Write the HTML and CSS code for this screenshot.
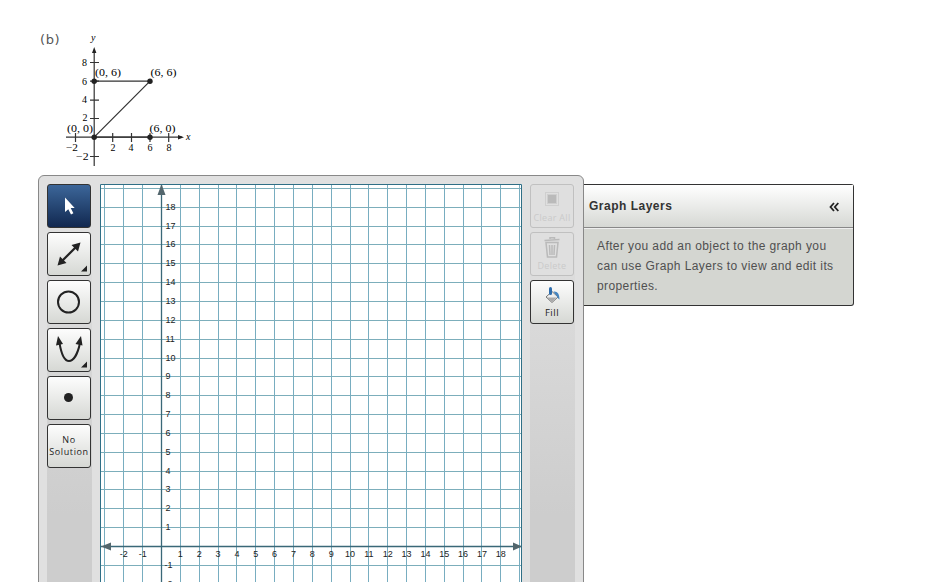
FILE: index.html
```html
<!DOCTYPE html>
<html>
<head>
    <meta charset="UTF-8">
    <title>Graphing Tool</title>
    <link rel="stylesheet" href="styles.css">
</head>
<body>
    <div class="question">
        <span class="part-label">(b)</span>
        <svg class="figure" width="150" height="150" viewBox="60 25 150 150">
            <g class="figure-lines">
                <path d="M94.2 50V166M66 137.2H182M75.5 133v9M112.7 133v9M131.5 133v9M150 133v9M168.7 133v9M90 62.5h9M90 81.2h9M90 100.2h9M90 118.5h9M90 156.5h9"/>
                <path d="M94.2 81.2H150L94.2 137.2H150"/>
            </g>
            <g class="figure-dots">
                <path d="M94.2 47l-2.2 6h4.4zM184 137.2l-6-2.2v4.4z"/>
                <circle cx="94.2" cy="81.2" r="2.7"/>
                <circle cx="150" cy="81.2" r="2.7"/>
                <circle cx="94.2" cy="137.2" r="2.7"/>
                <circle cx="150" cy="137.2" r="2.7"/>
            </g>
            <g class="figure-text">
                <text x="91" y="41" class="italic">y</text>
                <text x="186" y="140" class="italic">x</text>
                <text x="82" y="66">8</text>
                <text x="82" y="85">6</text>
                <text x="82" y="103">4</text>
                <text x="82.5" y="121">2</text>
                <text x="76" y="160" textLength="12.5" lengthAdjust="spacingAndGlyphs">−2</text>
                <text x="66" y="151" textLength="12" lengthAdjust="spacingAndGlyphs">−2</text>
                <text x="110.5" y="151">2</text>
                <text x="128.5" y="151">4</text>
                <text x="147.5" y="151">6</text>
                <text x="166.5" y="151">8</text>
            </g>
            <g class="figure-points">
                <text x="95" y="76" textLength="26" lengthAdjust="spacingAndGlyphs">(0, 6)</text>
                <text x="150.5" y="76" textLength="26" lengthAdjust="spacingAndGlyphs">(6, 6)</text>
                <text x="67" y="132" textLength="26" lengthAdjust="spacingAndGlyphs">(0, 0)</text>
                <text x="149.5" y="132" textLength="26" lengthAdjust="spacingAndGlyphs">(6, 0)</text>
            </g>
        </svg>
    </div>

    <div class="graph-tool">
        <div class="tool-frame">
            <div class="toolbar">
                <button class="tool-btn active">
                    <svg width="42" height="42"><path d="M17 12.500v14.500l3.300-2.800 2.700 5.300 2.400-1.200-2.700-5.300h4z" fill="#fff"/></svg>
                </button>
                <button class="tool-btn">
                    <svg width="42" height="42">
                        <path d="M13 29L30 12" stroke="#222" stroke-width="2.200"/>
                        <path d="M9.500 32.500l2.500-9 6.500 6.500zM32.500 9.500l-9 2.500 6.500 6.500zM39 32.500v6h-6z" fill="#222"/>
                    </svg>
                </button>
                <button class="tool-btn">
                    <svg width="42" height="42"><circle cx="20.500" cy="21" r="10.500" fill="none" stroke="#222" stroke-width="2"/></svg>
                </button>
                <button class="tool-btn">
                    <svg width="42" height="42">
                        <path d="M11.500 14C13.500 26 17 32 21 32S29.500 26 32 14" fill="none" stroke="#222" stroke-width="2"/>
                        <path d="M10 7L8 16.500l7-1.500zM33 7L27.500 15l7 1.500zM39 32.500v6h-6z" fill="#222"/>
                    </svg>
                </button>
                <button class="tool-btn">
                    <svg width="42" height="42"><circle cx="20.500" cy="20.500" r="4.500" fill="#222"/></svg>
                </button>
                <button class="tool-btn no-solution">No<br>Solution</button>
            </div>

            <svg class="graph" id="graph" width="422" height="398"></svg>

            <div class="toolbar">
                <button class="tool-btn labeled disabled">
                    <svg width="20" height="22">
                        <rect x="3.500" y="3.500" width="13" height="13" fill="none" stroke="#888" stroke-dasharray="1 1"/>
                        <rect x="5.500" y="5.500" width="9" height="9" fill="none" stroke="#888" stroke-dasharray="1 1"/>
                        <rect x="6" y="6" width="8" height="8" fill="#777"/>
                    </svg>
                    <span>Clear All</span>
                </button>
                <button class="tool-btn labeled disabled">
                    <svg width="20" height="22" fill="none" stroke="#777" stroke-width="1.500">
                        <path d="M2.500 3.500l15-1M8 2V.8h4.500V2M4 5.500l1.500 14.500h9L16 5.500zM7.500 8l.5 10M10 8v10M12.500 8L12 18"/>
                    </svg>
                    <span>Delete</span>
                </button>
                <button class="tool-btn labeled">
                    <svg width="20" height="20">
                        <path d="M4 11l6-5.500 6 5.500-6 5.500z" fill="#eee" stroke="#777"/>
                        <path d="M4.500 11.500h10l-4.500 4.500z" fill="#aaa"/>
                        <path d="M11.500 5.500c4-.5 6 2.500 6 8-2-1-2.500-4-4-5z" fill="#4585c0"/>
                        <path d="M8.500 2.500v5" stroke="#2e6dad" stroke-width="3" stroke-linecap="round"/>
                    </svg>
                    <span>Fill</span>
                </button>
            </div>
        </div>

        <div class="layers">
            <div class="layers-header">
                <span>Graph Layers</span>
                <svg width="10" height="10" fill="none" stroke="#222" stroke-width="1.800"><path d="M5 1L1.500 5 5 9M9.300 1L5.800 5l3.500 4"/></svg>
            </div>
            <p class="layers-body">After you add an object to the graph you can use Graph Layers to view and edit its properties.</p>
        </div>
    </div>

    <script>
        const graph = document.getElementById('graph');
        const step = 18.85;
        const originX = 61.5;
        const originY = 362.5;

        function add(tag, attrs, text) {
            const el = document.createElementNS('http://www.w3.org/2000/svg', tag);
            for (const key in attrs) {
                el.setAttribute(key, attrs[key]);
            }
            if (text !== undefined) {
                el.textContent = text;
            }
            graph.appendChild(el);
        }

        // Grid lines
        for (let i = -3; i <= 19; i++) {
            const x = Math.floor(originX + i * step) + 0.5;
            const y = Math.floor(originY - i * step) + 0.5;
            add('line', { x1: x, y1: 0, x2: x, y2: 398, class: 'grid-v' });
            add('line', { x1: 0, y1: y, x2: 422, y2: y, class: 'grid-h' });
        }

        // Axes with arrow heads
        add('line', { x1: originX, y1: 0, x2: originX, y2: 398, class: 'axis' });
        add('line', { x1: 0, y1: originY, x2: 422, y2: originY, class: 'axis' });
        add('path', { d: 'M61.500 0l-4 11h8zM1 362.500l10-4v8zM422 362.500l-9-4v8z', class: 'arrow' });

        // Axis numbers
        for (let i = -2; i <= 18; i++) {
            if (i === 0) continue;
            add('text', { x: originX + i * step, y: originY + 10.5, class: 'num num-x' }, i);
            add('text', { x: i < 0 ? 64.5 : 65.5, y: originY - i * step + 2.5, class: 'num' }, i);
        }

        add('path', { d: 'M.5 398V.5h421V398', class: 'graph-border' });
    </script>
</body>
</html>
```

FILE: styles.css
```css
body {
    margin: 0;
    height: 582px;
    overflow: hidden;
    background: #fff;
    font-family: "Liberation Sans", Arial, sans-serif;
}

.question {
    display: flex;
    height: 150px;
    padding: 25px 0 0 40px;
}

.part-label {
    width: 20px;
    padding-top: 6px;
    color: #555;
    font: 13px/17px "DejaVu Sans", Verdana, sans-serif;
    letter-spacing: 0.6px;
}

.figure-lines {
    fill: none;
    stroke: #333;
    stroke-width: 1.2;
}

.figure-dots {
    fill: #222;
}

.figure-text {
    font: 10px "Liberation Serif", "Times New Roman", serif;
}

.figure-points {
    font: 11px "Liberation Serif", "Times New Roman", serif;
}

.italic {
    font-style: italic;
}

.graph-tool {
    display: flex;
    align-items: flex-start;
    padding-left: 38px;
}

.tool-frame {
    display: flex;
    box-sizing: border-box;
    width: 546px;
    height: 420px;
    padding: 8px;
    border: 1px solid #888;
    border-radius: 6px;
    background: #e0e0e0;
}

.toolbar {
    display: flex;
    flex-direction: column;
    gap: 4px;
    width: 45px;
    background: linear-gradient(#e2e2e2, #cdcdcd 330px);
}

.tool-btn {
    display: flex;
    justify-content: center;
    align-items: center;
    box-sizing: border-box;
    width: 44px;
    height: 44px;
    padding: 0;
    border: 1px solid #333;
    border-radius: 3px;
    background: linear-gradient(#fdfdfd, #d6d8d4);
    color: #222;
    font-family: "Open Sans", Verdana, sans-serif;
    flex-shrink: 0;
}

.tool-btn.active {
    background: linear-gradient(#3c6699, #112850);
}

.no-solution {
    font-size: 9px;
    line-height: 12px;
    letter-spacing: 0.6px;
}

.labeled {
    flex-direction: column;
    justify-content: flex-end;
    padding-bottom: 4px;
    font-size: 9.5px;
    line-height: 13px;
    letter-spacing: 0.5px;
    white-space: nowrap;
}

.tool-btn.disabled {
    padding-bottom: 3px;
    border-color: #c0c0c0;
    background: #dfdfdf;
    color: #cacaca;
    font-size: 9px;
    letter-spacing: 0.3px;
}

.disabled svg {
    opacity: 0.35;
}

.graph {
    margin: 0 8px;
    background: #fff;
    flex-shrink: 0;
}

.grid-v {
    stroke: #78adc0;
}

.grid-h {
    stroke: #7caebb;
}

.axis {
    stroke: #3a6878;
    stroke-width: 1.3;
}

.arrow {
    fill: #53666d;
}

.num {
    fill: #222;
    font-size: 9px;
}

.num-x {
    text-anchor: middle;
}

.graph-border {
    fill: none;
    stroke: #2f6f86;
}

.layers {
    box-sizing: border-box;
    width: 270px;
    height: 122px;
    margin-top: 9px;
    border: 1px solid #333;
    border-left: none;
    border-radius: 0 3px 3px 0;
    background: #d4d6d1;
}

.layers-header {
    display: flex;
    justify-content: space-between;
    align-items: center;
    height: 42px;
    padding: 0 14px 0 5px;
    border-bottom: 1px solid #888;
    background: linear-gradient(#fff, #d6d8d4);
    color: #333;
    font-size: 12px;
    font-weight: bold;
    letter-spacing: 0.5px;
}

.layers-header svg {
    margin-top: 2px;
}

.layers-body {
    margin: 0;
    padding: 7px 10px 0 13px;
    border-top: 1px solid #eee;
    color: #505050;
    font-size: 12px;
    line-height: 20px;
    letter-spacing: 0.4px;
}
```
